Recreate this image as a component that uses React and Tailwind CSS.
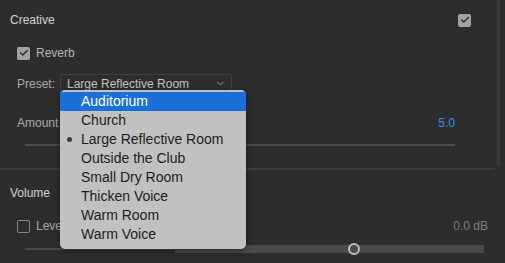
import { Check, ChevronDown } from 'lucide-react';

const presets = [
  'Auditorium',
  'Church',
  'Large Reflective Room',
  'Outside the Club',
  'Small Dry Room',
  'Thicken Voice',
  'Warm Room',
  'Warm Voice',
];

function Box({ checked }) {
  if (checked) {
    return (
      <span className="w-[13px] h-[13px] rounded-[2px] bg-[#a2a2a2] flex items-center justify-center">
        <Check size={10} strokeWidth={3.5} color="#2e2e2e" />
      </span>
    );
  }
  return <span className="w-[13px] h-[13px] rounded-[2px] border-[1.5px] border-[#858585]" />;
}

export default function App() {
  return (
    <div
      className="relative w-[505px] h-[263px] bg-[#2d2d2d] overflow-hidden flex text-[12px] text-[#c4c4c4]"
      style={{ fontFamily: '"Liberation Sans", Arial, sans-serif' }}
    >
      <div className="flex-1 flex flex-col">
        <section className="h-[168px] flex flex-col">
          <div className="h-[40px] flex items-center justify-between pl-[10px] pr-[26px]">
            <span className="text-[#d2d2d2] font-medium">Creative</span>
            <Box checked />
          </div>
          <div className="h-[26px] flex items-center gap-[6px] pl-[17px]">
            <Box checked />
            <span className="text-[#b4b4b4]">Reverb</span>
          </div>
          <div className="mt-[8px] h-[19px] flex items-center pl-[17px]">
            <span className="w-[43px] text-[#a8a8a8]">Preset:</span>
            <div className="w-[172px] h-[19px] border border-[#404040] rounded-[2px] flex items-center justify-between pl-[6px] pr-[5px]">
              <span className="text-[#c2c2c2]">Large Reflective Room</span>
              <ChevronDown size={11} strokeWidth={2} color="#a6a6a6" />
            </div>
          </div>
          <div className="mt-[20px] h-[20px] flex items-center justify-between pl-[17px] pr-[42px]">
            <span className="text-[#a8a8a8]">Amount</span>
            <span className="text-[#3d8fe4] font-medium">5.0</span>
          </div>
          <div className="mt-[11px] ml-[25px] w-[430px] h-[2px] bg-[#4a4a4a]" />
        </section>
        <div className="h-[2px] bg-[#3b3b3b] mr-[2px]" />
        <section className="flex flex-col">
          <div className="mt-[13px] h-[20px] flex items-center pl-[10px]">
            <span className="text-[#d2d2d2] font-medium">Volume</span>
          </div>
          <div className="mt-[13px] h-[20px] flex items-center justify-between pl-[17px] pr-[9px]">
            <div className="flex items-center gap-[6px]">
              <Box />
              <span className="text-[#a8a8a8]">Level</span>
            </div>
            <span className="text-[#7c7c7c]">0.0 dB</span>
          </div>
          <div className="mt-[9px] ml-[25px] w-[459px] h-[8px] flex items-center">
            <div className="w-[150px] h-[2px] bg-[#484848]" />
            <div className="relative flex-1 h-[8px] bg-[#4a4a4a]">
              <span className="absolute left-[173px] top-[-2px] w-[12px] h-[12px] rounded-full border-2 border-[#bdbdbd] bg-[#4a4a4a]" />
            </div>
          </div>
        </section>
      </div>
      <div className="w-[8px] flex">
        <div className="w-[3px] h-[166px] bg-[#3a3a3a]" />
      </div>

      <div className="absolute left-[60px] top-[90px] w-[186px] pt-[2px] pb-[5px] rounded-[5px] bg-[#c1c1c1] shadow-[0_2px_6px_rgba(0,0,0,0.45)] text-[14px] text-[#1c1c1c]">
        {presets.map(p => (
          <div
            key={p}
            className={
              p === 'Auditorium'
                ? 'h-[19px] flex items-center pl-[21px] bg-[#1b6fd8] text-white'
                : 'relative h-[19px] flex items-center pl-[21px]'
            }
          >
            {p === 'Large Reflective Room' && (
              <span className="absolute left-[7px] top-[7px] w-[5px] h-[5px] rounded-full bg-[#3a3a3a]" />
            )}
            {p}
          </div>
        ))}
      </div>
    </div>
  );
}
